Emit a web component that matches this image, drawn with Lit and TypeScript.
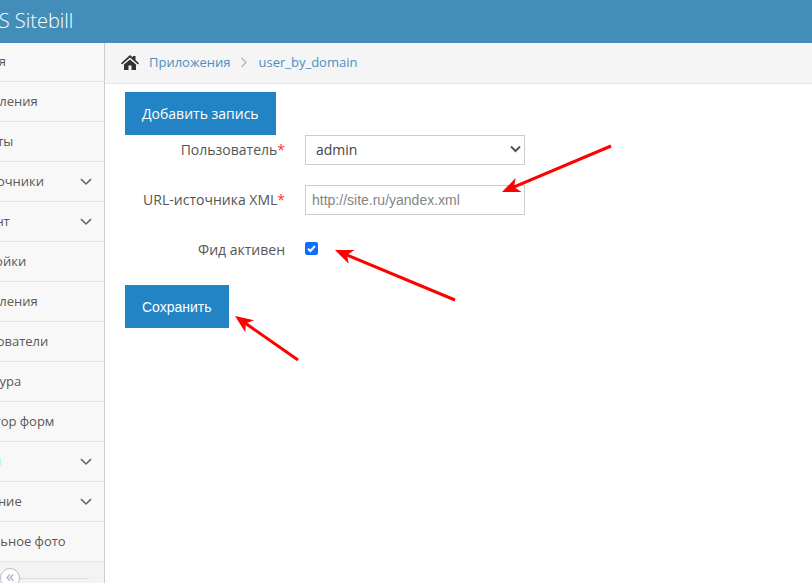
import { LitElement, html, css, svg } from "lit";
import { customElement } from "lit/decorators.js";

const ITEMS: { t: string; arrow?: boolean; badge?: boolean }[] = [
  { t: "Миссия" },
  { t: "Обновления" },
  { t: "Клиенты" },
  { t: "Справочники", arrow: true },
  { t: "Контент", arrow: true },
  { t: "Настройки" },
  { t: "Обновления" },
  { t: "Пользователи" },
  { t: "Структура" },
  { t: "Редактор форм" },
  { t: "", arrow: true, badge: true },
  { t: "Описание", arrow: true },
  { t: "Актуальное фото" },
];

const chevron = html`<svg class="chev" width="12" height="8" viewBox="0 0 12 8"><path d="M1 1.2 L6 6 L11 1.2" fill="none" stroke="#666" stroke-width="1.6"/></svg>`;

const arrow = (x1: number, y1: number, x2: number, y2: number) => {
  const a = Math.atan2(y2 - y1, x2 - x1);
  const c = Math.cos(a), s = Math.sin(a);
  const p = (b: number, o: number) => `${x2 - c * b - s * o},${y2 - s * b + c * o}`;
  return svg`<line x1=${x1} y1=${y1} x2=${x2 - c * 10} y2=${y2 - s * 10} stroke="#f00" stroke-width="3"/>
    <polygon points="${x2},${y2} ${p(18, 7.5)} ${p(13, 0)} ${p(18, -7.5)}" fill="#f00"/>`;
};

@customElement("app-root")
export class AppRoot extends LitElement {
  static styles = css`
    :host { display: block; position: relative; width: 812px; height: 583px; overflow: hidden; background: #fff; font-family: "Open Sans", sans-serif; font-size: 13px; color: #585858; }
    .top { height: 43px; background: #438eb9; color: #fff; font-size: 20px; font-weight: 300; line-height: 41px; display: flex; overflow: hidden; }
    .brand { margin-left: -31px; white-space: nowrap; }
    .body { display: flex; height: 540px; }
    .side { width: 104px; flex: none; background: #f8f8f8; border-right: 1px solid #ccc; display: flex; flex-direction: column; overflow: hidden; }
    .item { height: 39px; flex: none; border-bottom: 1px solid #e5e5e5; display: flex; align-items: center; padding-right: 12px; margin-left: -42px; white-space: nowrap; justify-content: space-between; }
    .item span { padding-bottom: 2px; }
    .item .chev { flex: none; }
    .item.first { height: 38px; }
    .badge { width: 43px; height: 8px; display: flex; justify-content: flex-end; padding: 0 !important; }
    .badge i { width: 2px; background: #b5f4f7; }
    .foot { flex: 1; background: #f3f3f3; display: flex; align-items: center; position: relative; padding-top: 6px; }
    .foot .circle { width: 20px; height: 20px; border-radius: 50%; border: 1px solid #bbb; background: #fff; box-sizing: border-box; color: #9aa8c8; font-size: 17px; line-height: 14px; text-align: center; flex: none; }
    .foot .rule { width: 69px; height: 1px; background: #ddd; }
    .main { flex: 1; min-width: 0; }
    .crumbs { height: 41px; box-sizing: border-box; background: #f5f5f5; border-bottom: 1px solid #e5e5e5; display: flex; align-items: center; padding: 0 0 2px 16px; font-size: 13px; color: #4c8fbd; }
    .crumbs .sep { margin: 1px 11px 0 9px; display: flex; }
    .crumbs .home { margin-right: 10px; }
    .content { padding: 8px 0 0 20px; }
    .btn { display: inline-flex; align-items: center; height: 43px; padding: 0 17px; background: #2283c5; color: #fff; font-size: 14px; border: 0; box-sizing: border-box; }
    .btn.save { font-family: "Liberation Sans", sans-serif; }
    .row { display: flex; align-items: center; height: 30px; margin-bottom: 20px; }
    .row label { width: 160px; text-align: right; font-size: 14px; color: #555; flex: none; padding-bottom: 2px; }
    .row label b { color: #f33; font-weight: 400; }
    .field { margin-left: 20px; width: 220px; height: 30px; box-sizing: border-box; border: 1px solid #ccc; background: #fff; display: flex; align-items: center; justify-content: space-between; }
    .select { padding: 0 3px 2px 10px; font-size: 14px; color: #444; }
    .input { padding: 0 6px; font-family: "Liberation Sans", sans-serif; font-size: 14px; color: #858585; }
    .check { margin-left: 20px; width: 13px; height: 13px; border-radius: 2px; background: #0d6efd; display: flex; align-items: center; justify-content: center; margin-top: -4px; }
    .overlay { position: absolute; inset: 0; pointer-events: none; }
  `;

  render() {
    return html`
      <div class="top"><div class="brand">CMS Sitebill</div></div>
      <div class="body">
        <div class="side">
          ${ITEMS.map((it, i) => html`<div class="item ${i === 0 ? "first" : ""}">
            ${it.badge ? html`<span class="badge"><i></i></span>` : html`<span>${it.t}</span>`}
            ${it.arrow ? chevron : ""}
          </div>`)}
          <div class="foot"><span class="circle">«</span><span class="rule"></span></div>
        </div>
        <div class="main">
          <div class="crumbs">
            <svg class="home" width="18" height="15" viewBox="0 0 18 15"><path d="M9 0 L11.8 2.5 V1 H14.5 V5 L18 8.2 L17 9.6 L9 2.6 L1 9.6 L0 8.2 Z M3 9.5 L9 4.4 L15 9.5 V15 H10.5 V10.5 H7.5 V15 H3 Z" fill="#333"/></svg>
            <span>Приложения</span>
            <span class="sep"><svg width="8" height="11" viewBox="0 0 8 11"><path d="M1.5 1 L6 5.5 L1.5 10" fill="none" stroke="#b5b5b5" stroke-width="1.3"/></svg></span>
            <span>user_by_domain</span>
          </div>
          <div class="content">
            <div class="btn">Добавить запись</div>
            <div class="row">
              <label>Пользователь<b>*</b></label>
              <div class="field select"><span>admin</span><svg width="11" height="8" viewBox="0 0 11 8"><path d="M1 1.5 L5.5 6 L10 1.5" fill="none" stroke="#555" stroke-width="2"/></svg></div>
            </div>
            <div class="row">
              <label>URL-источника XML<b>*</b></label>
              <div class="field input">http://site.ru/yandex.xml</div>
            </div>
            <div class="row">
              <label>Фид активен</label>
              <div class="check"><svg width="11" height="11" viewBox="0 0 11 11"><path d="M2 5.8 L4.4 8 L9 3" fill="none" stroke="#fff" stroke-width="2"/></svg></div>
            </div>
            <div class="btn save">Сохранить</div>
          </div>
        </div>
      </div>
      <svg class="overlay" width="812" height="583" viewBox="0 0 812 583">
        ${arrow(611, 146, 502, 192)}
        ${arrow(455, 300, 335, 250)}
        ${arrow(298, 360, 235, 316)}
      </svg>
    `;
  }
}
